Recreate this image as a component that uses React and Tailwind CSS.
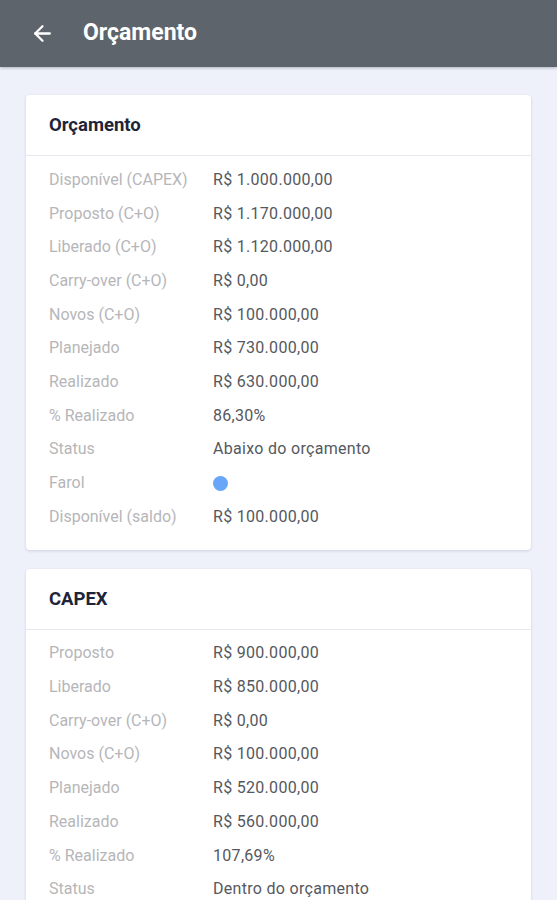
import { ArrowLeft } from "lucide-react";

const orcamento = [
  ["Disponível (CAPEX)", "R$ 1.000.000,00"],
  ["Proposto (C+O)", "R$ 1.170.000,00"],
  ["Liberado (C+O)", "R$ 1.120.000,00"],
  ["Carry-over (C+O)", "R$ 0,00"],
  ["Novos (C+O)", "R$ 100.000,00"],
  ["Planejado", "R$ 730.000,00"],
  ["Realizado", "R$ 630.000,00"],
  ["% Realizado", "86,30%"],
  ["Status", "Abaixo do orçamento"],
  ["Farol", "dot"],
  ["Disponível (saldo)", "R$ 100.000,00"],
];

const capex = [
  ["Proposto", "R$ 900.000,00"],
  ["Liberado", "R$ 850.000,00"],
  ["Carry-over (C+O)", "R$ 0,00"],
  ["Novos (C+O)", "R$ 100.000,00"],
  ["Planejado", "R$ 520.000,00"],
  ["Realizado", "R$ 560.000,00"],
  ["% Realizado", "107,69%"],
  ["Status", "Dentro do orçamento"],
  ["Farol", "dot"],
  ["Disponível (saldo)", "R$ 290.000,00"],
];

const Card = ({ title, rows }) => (
  <div className="bg-white rounded-[4px] shadow-[0_1px_3px_rgba(60,70,110,0.18)]">
    <div className="h-[61px] flex items-center px-[23px] pt-[2px] border-b border-[#e6e8ee]">
      <h2 className="text-[18.5px] font-bold text-[#1e2439]">{title}</h2>
    </div>
    <div className="pt-[7px] pb-[16px] px-[23px]">
      {rows.map(([label, value]) => (
        <div key={label} className="h-[33.7px] flex items-center text-[16px]">
          <span className="w-[164px] text-[#b6b6b9]">{label}</span>
          {value === "dot" ? (
            <span className="w-[15px] h-[15px] rounded-full bg-[#68a6f7]" />
          ) : (
            <span className="text-[#55585e] tracking-[0.3px]">{value}</span>
          )}
        </div>
      ))}
    </div>
  </div>
);

export default function App() {
  return (
    <div
      className="min-h-[900px] bg-[#eef0fa]"
      style={{ fontFamily: "Roboto, 'Liberation Sans', sans-serif" }}
    >
      <header className="h-[67px] bg-[#5e646b] flex items-center pl-[30px] gap-[28px] shadow-[0_1px_3px_rgba(0,0,0,0.25)]">
        <ArrowLeft size={25} color="white" strokeWidth={2.2} />
        <h1 className="text-white text-[23px] font-bold">Orçamento</h1>
      </header>
      <main className="px-[26px] pt-[28px] pb-[20px] flex flex-col gap-[19px]">
        <Card title="Orçamento" rows={orcamento} />
        <Card title="CAPEX" rows={capex} />
      </main>
    </div>
  );
}
